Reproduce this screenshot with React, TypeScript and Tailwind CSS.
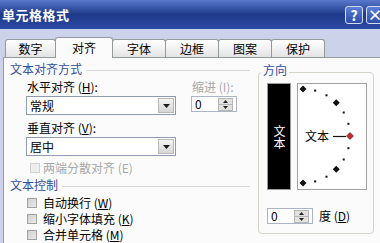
import React from "react";

const font = "font-['Noto_Sans_CJK_SC','Noto_Sans',sans-serif]";

function Select({ value }: { value: string }) {
  return (
    <div className="flex h-[19px] w-[150px] items-center border border-[#8e9ab0] bg-white pl-[3px] pr-[1px]">
      <span className="flex-1 leading-none">{value}</span>
      <div className="flex h-[15px] w-[16px] items-center justify-center border border-[#b8b8b8] bg-linear-to-b from-[#f4f4f4] to-[#d6d6d6]">
        <svg width="7" height="4">
          <path d="M0 0H7L3.5 4Z" fill="#1a1a1a" />
        </svg>
      </div>
    </div>
  );
}

function Spinner() {
  return (
    <div className="flex h-[16px] w-[46px] items-center border border-[#a9b4c6] bg-white pl-[3px] pr-[3px]">
      <span className="flex-1 leading-none">0</span>
      <div className="flex h-[13px] w-[15px] flex-col border border-[#b5b5b5] bg-[#e2e2e2]">
        <div className="flex flex-1 items-center justify-center border-b border-[#b5b5b5]">
          <svg width="5" height="3">
            <path d="M0 3L2.5 0L5 3Z" fill="#222" />
          </svg>
        </div>
        <div className="flex flex-1 items-center justify-center">
          <svg width="5" height="3">
            <path d="M0 0H5L2.5 3Z" fill="#222" />
          </svg>
        </div>
      </div>
    </div>
  );
}

function Check({ label, disabled }: { label: React.ReactNode; disabled?: boolean }) {
  return (
    <div className="flex h-[14px] items-center leading-[14px]">
      <div
        className={
          disabled
            ? "h-[10px] w-[10px] border border-[#d2d2d2] bg-[#ededed]"
            : "h-[10px] w-[10px] border border-[#a4a4a4] bg-linear-to-br from-[#cfcfcf] to-[#ebebeb]"
        }
      />
      <span className={disabled ? "ml-[3px] text-[#a8a8a8]" : "ml-[6px]"}>{label}</span>
    </div>
  );
}

function Tab({ label, active }: { label: string; active?: boolean }) {
  if (active) {
    return (
      <div className="relative z-10 -mb-px -ml-px flex h-[21px] w-[58px] items-center justify-center rounded-t-[3px] border border-b-0 border-[#919b9c] bg-[#fbfbfb]">
        {label}
      </div>
    );
  }
  return (
    <div className="-ml-px flex h-[18px] w-[54px] items-center justify-center rounded-t-[3px] border border-b-0 border-[#919b9c] bg-linear-to-b from-white to-[#e4e4e4] first:ml-0 first:w-[51px]">
      {label}
    </div>
  );
}

const angles = [90, 75, 60, 45, 30, 15, 0, -15, -30, -45, -60, -75, -90];

function Dial() {
  const cx = 5;
  const cy = 52;
  const r = 47;
  return (
    <svg className="absolute inset-0" width="68" height="105">
      {angles.map((a) => {
        const t = (a * Math.PI) / 180;
        const x = cx + r * Math.cos(t);
        const y = cy - r * Math.sin(t);
        if (a % 45 === 0) {
          const red = a === 0;
          return (
            <path
              key={a}
              d={`M${x} ${y - 3.5}L${x + 3.5} ${y}L${x} ${y + 3.5}L${x - 3.5} ${y}Z`}
              fill={red ? "#c4262e" : "#111"}
              stroke={red ? "#6a1014" : "none"}
              strokeWidth="0.6"
            />
          );
        }
        return <rect key={a} x={x - 1} y={y - 1} width="2" height="2" fill="#111" />;
      })}
      <line x1="35" y1="52.5" x2="48" y2="52.5" stroke="#111" strokeWidth="1.2" />
    </svg>
  );
}

export default function App() {
  return (
    <div className={`flex h-[243px] w-[380px] flex-col overflow-hidden bg-[#ccd2ea] text-[12px] text-black ${font}`}>
      {/* title bar */}
      <div className="flex h-[29px] shrink-0 items-center justify-between bg-linear-to-b from-[#5a79cc] via-[#1f3a8a] to-[#2b49a6] pl-[2px]">
        <span className="text-[13px] font-bold tracking-[0.5px] text-white">单元格格式</span>
        <div className="-mr-[4px] flex gap-[3px]">
          <div className="flex h-[18px] w-[18px] items-center justify-center rounded-[3px] border border-[#d4dcf2] bg-linear-to-b from-[#5b7fd8] to-[#2c4ca8] text-[14px] font-bold leading-none text-white">
            ?
          </div>
          <div className="flex h-[18px] w-[18px] items-center justify-center rounded-[3px] border border-[#d4dcf2] bg-linear-to-b from-[#5b7fd8] to-[#2c4ca8] text-[15px] font-bold leading-none text-white">
            ×
          </div>
        </div>
      </div>

      {/* tabs */}
      <div className="flex h-[28px] shrink-0 items-end pl-[5px]">
        <Tab label="数字" />
        <Tab label="对齐" active />
        <Tab label="字体" />
        <Tab label="边框" />
        <Tab label="图案" />
        <Tab label="保护" />
      </div>

      {/* panel */}
      <div className="ml-[3px] flex flex-1 border-l border-t border-[#919b9c] bg-[#fbfbfb]">
        <div className="flex w-[248px] flex-col">
          <div className="mt-[4px] flex h-[14px] items-center pl-[6px] pr-[2px] leading-[14px] text-[#2f4f9f]">
            <span>文本对齐方式</span>
            <div className="ml-[4px] mt-[3px] h-px flex-1 bg-[#d9d9d9]" />
          </div>

          <div className="flex">
            <div className="ml-[22px] flex w-[150px] flex-col">
              <div className="mt-[4px] h-[14px] pl-[1px] leading-[14px]">
                水平对齐 (<u>H</u>):
              </div>
              <div className="mt-[2px]">
                <Select value="常规" />
              </div>
              <div className="mt-[6px] h-[14px] pl-[1px] leading-[14px]">
                垂直对齐 (<u>V</u>):
              </div>
              <div className="mt-[2px]">
                <Select value="居中" />
              </div>
            </div>
            <div className="ml-[15px] flex flex-col">
              <div className="mt-[4px] h-[14px] pl-[1px] leading-[14px] text-[#a8a8a8]">缩进 (I):</div>
              <div className="mt-[2px]">
                <Spinner />
              </div>
            </div>
          </div>

          <div className="mt-[5px] pl-[26px]">
            <Check label="两端分散对齐 (E)" disabled />
          </div>

          <div className="mt-[3px] flex h-[14px] items-center pl-[6px] pr-[2px] leading-[14px] text-[#2f4f9f]">
            <span>文本控制</span>
            <div className="ml-[4px] mt-[3px] h-px flex-1 bg-[#d9d9d9]" />
          </div>

          <div className="mt-[4px] flex flex-col gap-[2px] pl-[23px]">
            <Check label={<>自动换行 (<u>W</u>)</>} />
            <Check label={<>缩小字体填充 (<u>K</u>)</>} />
            <Check label={<>合并单元格 (<u>M</u>)</>} />
          </div>
        </div>

        {/* orientation group */}
        <div className="relative ml-[6px] mt-[14px] flex h-[162px] w-[116px] flex-col rounded-[4px] border border-[#d3d3cb]">
          <span className="absolute -top-[10px] left-[2px] bg-[#fbfbfb] px-[2px] leading-[14px] text-[#2f4f9f]">
            方向
          </span>
          <div className="flex pl-[8px] pt-[10px]">
            <div className="flex h-[107px] w-[24px] items-center justify-center border border-[#9a9a9a] bg-black">
              <span className="leading-[14px] text-white [writing-mode:vertical-rl]">文本</span>
            </div>
            <div className="relative ml-[6px] h-[107px] w-[70px] border border-[#a0a0a0] bg-white">
              <Dial />
              <span className="absolute left-[7px] top-[45px] leading-[14px]">文本</span>
            </div>
          </div>
          <div className="mt-[18px] flex items-center pl-[8px]">
            <Spinner />
            <span className="ml-[6px] leading-[14px]">
              度 (<u>D</u>)
            </span>
          </div>
        </div>
      </div>
    </div>
  );
}
